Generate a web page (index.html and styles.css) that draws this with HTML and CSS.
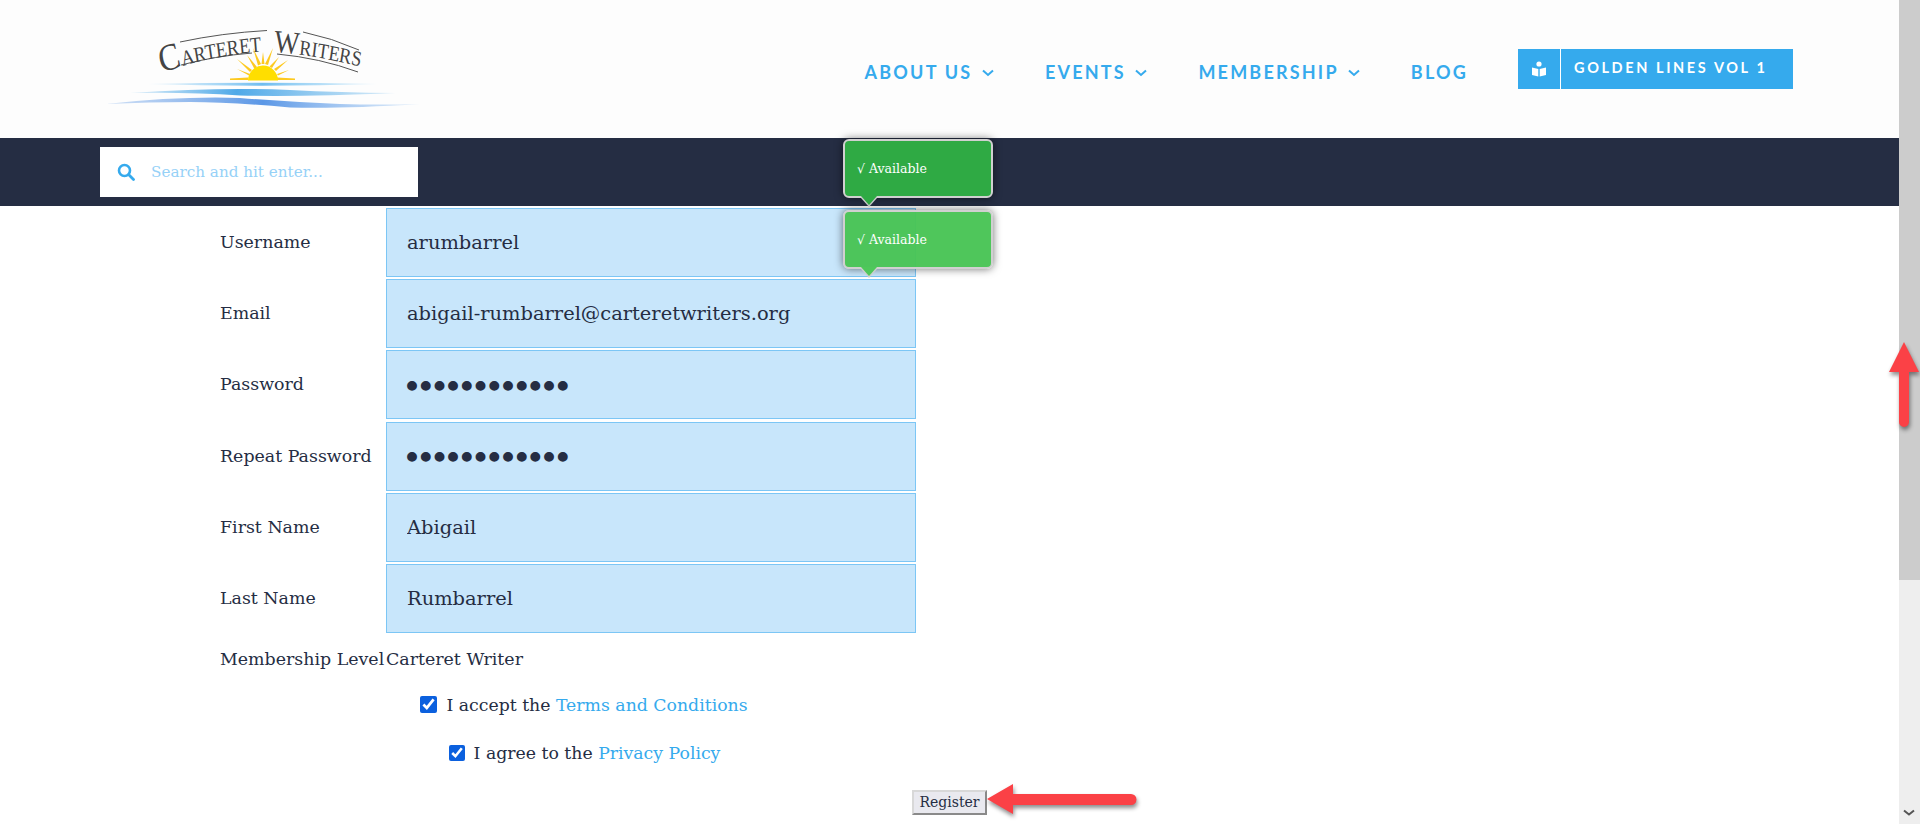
FILE: index.html
```html
<!DOCTYPE html>
<html lang="en">
<head>
    <meta charset="UTF-8">
    <meta name="viewport" content="width=device-width, initial-scale=1.0">
    <title>Register - Carteret Writers</title>
    <link rel="stylesheet" href="styles.css">
</head>
<body>
    <div class="page">
        <header class="site-header">
            <a class="logo" href="#">
                <svg width="330" height="138" viewBox="100 0 330 138">
                    <defs>
                        <path id="arcLeft" d="M193 73 Q248 55 329 50"/>
                        <path id="arcRight" d="M326 52 Q383 55 470 76"/>
                        <linearGradient id="waveTop" x1="0" x2="1" y1="0" y2="0">
                            <stop offset="0" stop-color="#9ed4f5" stop-opacity="0.2"/>
                            <stop offset="0.5" stop-color="#6fbdf0"/>
                            <stop offset="1" stop-color="#a9dbf7" stop-opacity="0.3"/>
                        </linearGradient>
                        <linearGradient id="waveMid" x1="0" x2="1" y1="0" y2="0">
                            <stop offset="0" stop-color="#58aee8" stop-opacity="0.2"/>
                            <stop offset="0.4" stop-color="#4fa9e8"/>
                            <stop offset="1" stop-color="#58aee8" stop-opacity="0.2"/>
                        </linearGradient>
                        <linearGradient id="waveLow" x1="0" x2="1" y1="0" y2="0">
                            <stop offset="0" stop-color="#6a9fe6" stop-opacity="0.3"/>
                            <stop offset="0.5" stop-color="#5b97e6"/>
                            <stop offset="1" stop-color="#7fb4ee" stop-opacity="0.2"/>
                        </linearGradient>
                    </defs>
                    <path class="logo-rule" d="M180 42 Q222 33 267 30.500"/>
                    <path class="logo-rule" d="M181 65 Q215 56 252 53"/>
                    <path class="logo-rule" d="M303 32 Q332 38 359 50"/>
                    <path class="logo-rule" d="M277 54 Q320 58 358 72"/>
                    <g transform="scale(0.84 1)">
                        <text class="logo-text"><textPath href="#arcLeft"><tspan class="logo-cap">C</tspan>ARTERET</textPath></text>
                        <text class="logo-text"><textPath href="#arcRight"><tspan class="logo-cap-w">W</tspan>RITERS</textPath></text>
                    </g>
                    <g fill="#fdc91f">
                        <path d="M230 78.500 L248 77.500 L248 80 L230 80 Z"/>
                        <path d="M237 69 L250 74 L249 75.500 Z"/>
                        <path d="M237 59 L252 70 L250 72 Z"/>
                        <path d="M247 55 L257 67 L254.500 69 Z"/>
                        <path d="M253 48 L261 64 L258 65.500 Z"/>
                        <path d="M263 52 L264.500 64 L261.500 64 Z"/>
                        <path d="M273 48 L268 65 L265 64 Z"/>
                        <path d="M279 57 L272 68 L269.500 66.500 Z"/>
                        <path d="M288 60 L276 71 L274 69 Z"/>
                        <path d="M289 70 L278 75.500 L277 74 Z"/>
                        <path d="M295 78.500 L277 77.500 L277 80 L295 80 Z"/>
                    </g>
                    <path d="M248 80.500 A15 15 0 0 1 278 80.500 Z" fill="#ffde00"/>
                    <path d="M148 84 Q260 81.500 377 84 Q260 87.500 148 84 Z" fill="url(#waveTop)"/>
                    <path d="M130 93 Q220 87 290 90 Q340 92.500 396 93 Q300 97 240 95.500 Q190 92 130 93 Z" fill="url(#waveMid)"/>
                    <path d="M106 104 Q180 96 240 98 Q290 102 340 104 Q380 105 420 104 Q340 109 290 107.500 Q230 102 190 102 Q150 102 106 104 Z" fill="url(#waveLow)"/>
                </svg>
            </a>
            <nav class="main-nav">
                <a href="#">ABOUT US <svg class="chev" width="12" height="8" viewBox="0 0 12 8"><path d="M1 1.500 L6 6 L11 1.500"/></svg></a>
                <a href="#">EVENTS <svg class="chev" width="12" height="8" viewBox="0 0 12 8"><path d="M1 1.500 L6 6 L11 1.500"/></svg></a>
                <a href="#">MEMBERSHIP <svg class="chev" width="12" height="8" viewBox="0 0 12 8"><path d="M1 1.500 L6 6 L11 1.500"/></svg></a>
                <a href="#">BLOG</a>
            </nav>
            <a class="golden-btn" href="#">
                <span class="golden-icon">
                    <svg width="16" height="16" viewBox="0 0 16 16" fill="#fff">
                        <circle cx="8" cy="3" r="2.600"/>
                        <path d="M1 6.500 L7.300 8 V15.500 L1 14 Z"/>
                        <path d="M15 6.500 L8.700 8 V15.500 L15 14 Z"/>
                    </svg>
                </span>
                <span class="golden-text">GOLDEN LINES VOL 1</span>
            </a>
        </header>

        <div class="search-bar">
            <form class="search-box">
                <svg width="18" height="18" viewBox="0 0 18 18" fill="none" stroke="#35aaed">
                    <circle cx="7.500" cy="7.500" r="5.500" stroke-width="2.600"/>
                    <path d="M11.800 11.800 L16.500 16.500" stroke-width="2.800" stroke-linecap="round"/>
                </svg>
                <input type="text" placeholder="Search and hit enter...">
            </form>
        </div>

        <form class="register-form">
            <div class="form-row">
                <label for="username">Username</label>
                <input type="text" id="username" value="arumbarrel">
            </div>
            <div class="form-row">
                <label for="email">Email</label>
                <input type="text" id="email" value="abigail-rumbarrel@carteretwriters.org">
            </div>
            <div class="form-row">
                <label for="password">Password</label>
                <input type="password" id="password" value="abigailpass1">
            </div>
            <div class="form-row">
                <label for="password2">Repeat Password</label>
                <input type="password" id="password2" value="abigailpass1">
            </div>
            <div class="form-row">
                <label for="firstName">First Name</label>
                <input type="text" id="firstName" value="Abigail">
            </div>
            <div class="form-row">
                <label for="lastName">Last Name</label>
                <input type="text" id="lastName" value="Rumbarrel">
            </div>
            <div class="level-row">
                <span>Membership Level</span>
                <span>Carteret Writer</span>
            </div>
            <label class="check-row first">
                <input type="checkbox" checked>
                <span>I accept the <a href="#">Terms and Conditions</a></span>
            </label>
            <label class="check-row second">
                <input type="checkbox" checked>
                <span>I agree to the <a href="#">Privacy Policy</a></span>
            </label>
            <button type="button" class="register-btn">Register</button>
        </form>

        <div class="tip tip-dark">&radic; Available</div>
        <div class="tip tip-light">&radic; Available</div>

        <svg class="arrow arrow-left" width="164" height="44" viewBox="0 0 164 44">
            <path d="M2 18 L28 3 V13 H146 a5.500 5.500 0 0 1 0 11 H28 V33 Z"/>
        </svg>
    </div>

    <aside class="scrollbar">
        <div class="scroll-thumb"></div>
        <svg class="scroll-down" width="12" height="8" viewBox="0 0 12 8"><path d="M1 1.500 L6 5.500 L11 1.500"/></svg>
    </aside>

    <svg class="arrow arrow-up" width="40" height="100" viewBox="0 0 40 100">
        <path d="M15 2 L30 32 H20 V82 a5 5 0 0 1 -10 0 V32 H0 Z"/>
    </svg>
</body>
</html>
```

FILE: styles.css
```css
body {
    margin: 0;
    height: 100vh;
    overflow: hidden;
    display: flex;
    background-color: #ffffff;
    color: #252d43;
    font-family: "DejaVu Serif", serif;
}

a {
    text-decoration: none;
}

.page {
    flex: 1;
    position: relative;
    min-width: 0;
}

/* Header */
.site-header {
    height: 138px;
    background-color: #fdfdfd;
    display: flex;
    align-items: center;
    padding: 0 106px 0 100px;
    box-sizing: border-box;
}

.logo {
    display: block;
    height: 138px;
}

.logo-rule {
    fill: none;
    stroke: #555;
    stroke-width: 1;
}

.logo-text {
    font-family: "Liberation Serif", serif;
    font-size: 21.500px;
    fill: #444;
}

.logo-cap {
    font-size: 38px;
}

.logo-cap-w {
    font-size: 32px;
}

.main-nav {
    margin-left: auto;
    display: flex;
    gap: 51px;
    padding-top: 6px;
}

.main-nav a {
    color: #35aaed;
    font-family: Lato, sans-serif;
    font-size: 18px;
    font-weight: 700;
    letter-spacing: 2.200px;
    white-space: nowrap;
}

.chev {
    fill: none;
    stroke: #35aaed;
    stroke-width: 2;
    margin-left: 3px;
    vertical-align: 2px;
}

.golden-btn {
    margin-left: 50px;
    width: 275px;
    height: 40px;
    display: flex;
    background-color: #35aaed;
    color: #ffffff;
}

.golden-icon {
    width: 42px;
    display: flex;
    align-items: center;
    justify-content: center;
    border-right: 1px solid #ffffff;
}

.golden-text {
    padding-left: 13px;
    line-height: 38px;
    font-family: Lato, sans-serif;
    font-size: 14.500px;
    font-weight: 700;
    letter-spacing: 2.600px;
    white-space: nowrap;
}

/* Search */
.search-bar {
    height: 68px;
    background-color: #252d43;
    padding: 9px 0 0 100px;
    box-sizing: border-box;
}

.search-box {
    width: 318px;
    height: 50px;
    background-color: #ffffff;
    display: flex;
    align-items: center;
    padding-left: 17px;
    box-sizing: border-box;
}

.search-box input {
    border: none;
    outline: none;
    margin-left: 16px;
    padding: 0;
    width: 260px;
    font-family: "DejaVu Serif", serif;
    font-size: 15.200px;
    background: transparent;
}

.search-box input::placeholder {
    color: #96d1f7;
    opacity: 1;
}

/* Register form */
.register-form {
    margin: 2px 0 0 220px;
    width: 728px;
}

.form-row {
    display: grid;
    grid-template-columns: 166px 530px;
    align-items: center;
    margin-bottom: 2.200px;
}

.form-row label {
    font-size: 17.400px;
    padding-bottom: 1px;
}

.form-row input {
    height: 69px;
    box-sizing: border-box;
    padding: 0 20px;
    border: 1px solid #7cc6f5;
    background-color: #c8e6fb;
    color: #252d43;
    font-family: "DejaVu Serif", serif;
    font-size: 19.450px;
    outline: none;
}

.form-row input[type="password"] {
    padding: 4px 20px 0 15px;
    font-size: 34px;
    letter-spacing: -6.350px;
}

.level-row {
    display: grid;
    grid-template-columns: 166px auto;
    font-size: 17.400px;
    line-height: 20px;
    margin-top: 16px;
}

.check-row {
    display: flex;
    justify-content: center;
    align-items: center;
    gap: 9px;
    font-size: 17.300px;
    line-height: 24px;
}

.check-row.first {
    margin-top: 24px;
}

.check-row.second {
    margin-top: 24px;
    padding-left: 1px;
}

.check-row input {
    margin: 0;
    accent-color: #0b60de;
}

.check-row.first input {
    width: 17px;
    height: 17px;
}

.check-row.second input {
    width: 16px;
    height: 16px;
}

.check-row a {
    color: #35aaed;
}

.register-btn {
    display: block;
    margin: 25px 0 0 692px;
    width: 75px;
    height: 25px;
    padding: 0;
    font-family: "DejaVu Serif", serif;
    font-size: 14px;
    color: #252d43;
    background-color: #e9e9ef;
    border: 2px solid;
    border-color: #d8d8d8 #8a8a8a #8a8a8a #d8d8d8;
}

/* Tooltips */
.tip {
    position: absolute;
    left: 843px;
    width: 150px;
    height: 59px;
    box-sizing: border-box;
    padding-left: 12px;
    line-height: 55px;
    font-size: 12.500px;
    color: #ffffff;
    border: 2px solid #d0d0d0;
    border-radius: 6px;
    box-shadow: 0 0 8px rgba(0, 0, 0, 0.55);
}

.tip::before,
.tip::after {
    content: "";
    position: absolute;
    left: 16px;
    border-style: solid;
    border-color: transparent;
    border-width: 9px 8px 0 8px;
}

.tip::before {
    top: 57px;
    border-top-color: #cfcfcf;
}

.tip::after {
    top: 55px;
}

.tip-dark {
    top: 139px;
    background-color: #2faa44;
}

.tip-dark::after {
    border-top-color: #2faa44;
}

.tip-light {
    top: 210px;
    background-color: rgba(72, 196, 84, 0.96);
}

.tip-light::after {
    border-top-color: #4ec85a;
}

/* Red annotation arrows */
.arrow {
    position: absolute;
    fill: #fb4146;
    filter: drop-shadow(1px 3px 2px rgba(0, 0, 0, 0.45));
}

.arrow-left {
    left: 985px;
    top: 781px;
}

.arrow-up {
    left: 1889px;
    top: 340px;
}

/* Scrollbar */
.scrollbar {
    width: 21px;
    position: relative;
    background-color: #eeeeee;
}

.scroll-thumb {
    height: 580px;
    background-color: #cccccc;
}

.scroll-down {
    position: absolute;
    left: 4px;
    bottom: 7px;
    fill: none;
    stroke: #555;
    stroke-width: 2;
}
```
